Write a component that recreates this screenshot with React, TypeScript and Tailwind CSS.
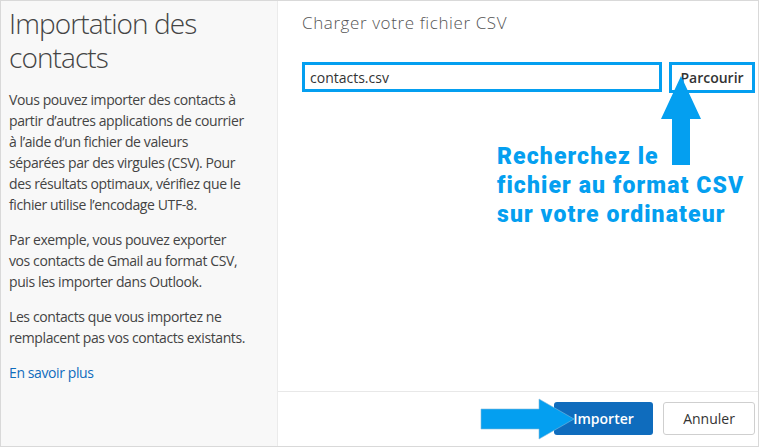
import React from 'react';

const ui = { fontFamily: '"Segoe UI", "Open Sans", "Noto Sans", sans-serif' };

function UpArrow() {
  return (
    <svg className="absolute left-[659px] top-[74px]" width="42" height="92" viewBox="0 0 42 92">
      <path d="M21 1 L41 44 L30 44 L30 90 L12 90 L12 44 L1 44 Z" fill="#049ff0" />
    </svg>
  );
}

function RightArrow() {
  return (
    <svg className="absolute left-[479px] top-[397px]" width="96" height="42" viewBox="0 0 96 42">
      <path d="M1 11 L59 11 L59 1 L94 21 L59 41 L59 31 L1 31 Z" fill="#049ff0" stroke="#7fb9dc" strokeWidth="0.6" />
    </svg>
  );
}

export default function App() {
  return (
    <div className="relative w-[759px] h-[447px] bg-white border border-[#d9d9d9] flex overflow-hidden" style={ui}>
      {/* left info panel */}
      <aside className="w-[277px] shrink-0 bg-[#f8f8f8] border-r border-[#ebebeb] pl-2 pt-[5px]">
        <h1 className="text-[28px] leading-[34px] font-light text-[#444] tracking-[-0.9px]">Importation des contacts</h1>
        <div className="w-[238px] mt-[15px] text-[14px] leading-[21px] text-[#444] tracking-[-0.4px] flex flex-col gap-[14px]">
          <p>
            Vous pouvez importer des contacts à partir d’autres applications de courrier à l’aide d’un fichier de
            valeurs séparées par des virgules (CSV). Pour des résultats optimaux, vérifiez que le fichier utilise
            l’encodage UTF-8.
          </p>
          <p>Par exemple, vous pouvez exporter vos contacts de Gmail au format CSV, puis les importer dans Outlook.</p>
          <p>Les contacts que vous importez ne remplacent pas vos contacts existants.</p>
          <a className="text-[#0f6cbd]">En savoir plus</a>
        </div>
      </aside>

      {/* right panel */}
      <section className="flex-1 flex flex-col">
        <div className="flex-1 pl-6 pr-[5px] pt-[10px]">
          <h2 className="text-[17px] leading-6 font-light text-[#555] tracking-[0.6px]">Charger votre fichier CSV</h2>
          <div className="mt-[27px] flex gap-[7px]">
            <div className="w-[360px] h-[30px] border-[3px] border-[#049ff0] flex items-center px-[5px] text-[14px] text-[#333]">
              contacts.csv
            </div>
            <div className="w-[86px] h-[31px] border-[3px] border-[#049ff0] flex items-center justify-center text-[14px] font-semibold text-[#333]">
              Parcourir
            </div>
          </div>
          <p
            className="mt-[49px] ml-[195px] text-[23px] leading-[29px] font-black text-[#049ff0] tracking-[1.1px]"
            style={{ fontFamily: 'Roboto, "Liberation Sans", sans-serif' }}
          >
            Recherchez le
            <br />
            fichier au format CSV
            <br />
            sur votre ordinateur
          </p>
        </div>
        <footer className="h-[55px] border-t border-[#e8e8e8] flex items-center justify-end gap-[10px] pr-[5px] pb-px">
          <button className="w-[99px] h-[33px] rounded-[3px] bg-[#0f6cbd] text-white text-[14px] font-semibold">
            Importer
          </button>
          <button className="w-[92px] h-[33px] rounded-[3px] bg-white border border-[#cfcfcf] text-[#333] text-[14px]">
            Annuler
          </button>
        </footer>
      </section>

      <UpArrow />
      <RightArrow />
    </div>
  );
}
